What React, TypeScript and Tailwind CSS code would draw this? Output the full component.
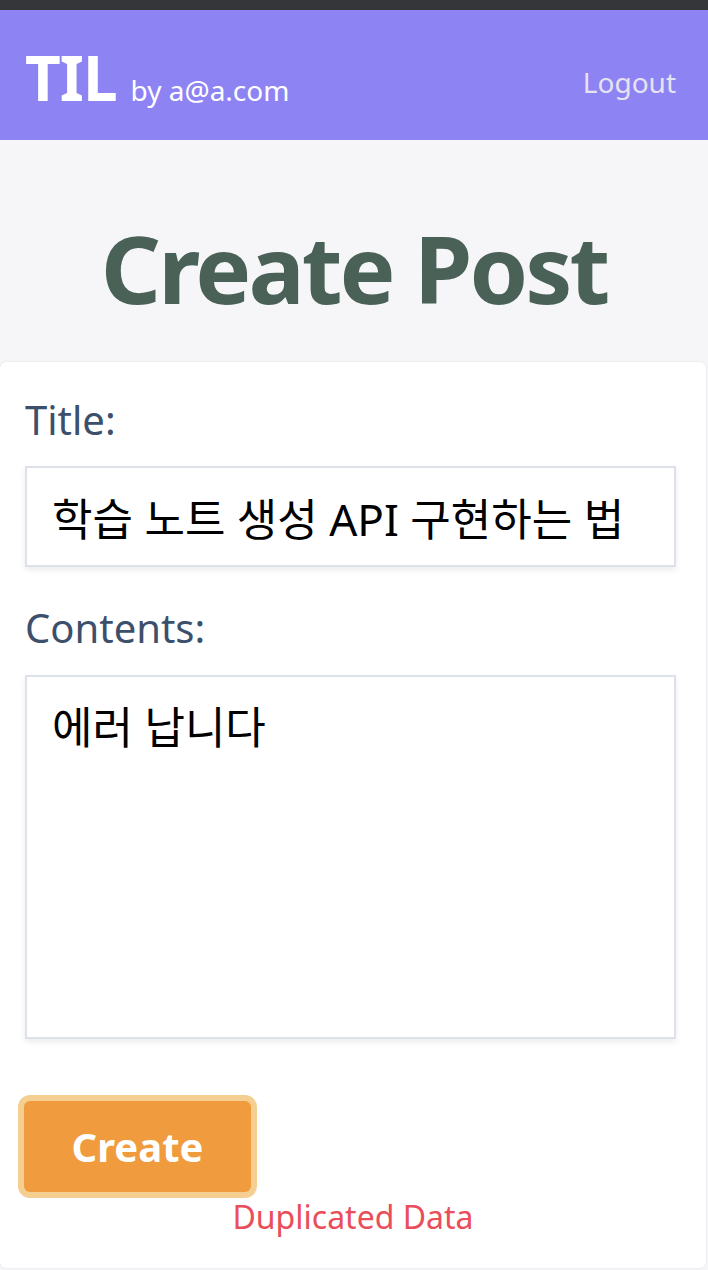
import React, { useState } from 'react'

const FONT = "font-['Noto_Sans','Noto_Sans_CJK_KR',sans-serif]"

export default function App() {
  const [title, setTitle] = useState('학습 노트 생성 API 구현하는 법')
  const [contents, setContents] = useState('에러 납니다')

  return (
    <div className={`${FONT} min-h-[1270px] bg-[#f6f6f8]`}>
      <div className="h-[10px] bg-[#35363a]" />

      {/* Header */}
      <header className="h-[130px] bg-[#8e83f3] flex items-center justify-between pl-[25px] pr-[32px]">
        <div className="flex items-baseline gap-[14px] mt-[4px]">
          <span className="text-[62px] font-bold text-white leading-none tracking-[-1px]">TIL</span>
          <span className="text-[28px] text-white leading-none">by a@a.com</span>
        </div>
        <button className="text-[28px] text-[#e6e3ef] leading-none mt-[14px]">Logout</button>
      </header>

      {/* Title */}
      <div className="h-[222px] pt-[81px] flex justify-center">
        <h1 className="text-[94px] font-bold text-[#4a6157] leading-none tracking-[-3px]">
          Create Post
        </h1>
      </div>

      {/* Form card */}
      <div className="w-[706px] bg-white rounded-[6px] shadow-[0_0_2px_rgba(0,0,0,0.12)] px-[25px] pt-[38px] pb-[32px] min-h-[906px]">
        <label className="block text-[40px] text-[#3c4f6b] leading-none">Title:</label>
        <input
          value={title}
          onChange={(e) => setTitle(e.target.value)}
          className="mt-[26px] block w-[651px] h-[101px] border-2 border-[#dde2ea] shadow-[0_3px_6px_rgba(0,0,0,0.08)] px-[25px] text-[44px] text-black outline-none"
        />

        <label className="block mt-[41px] text-[40px] text-[#3c4f6b] leading-none">Contents:</label>
        <textarea
          value={contents}
          onChange={(e) => setContents(e.target.value)}
          className="mt-[27px] block w-[651px] h-[364px] border-2 border-[#dde2ea] shadow-[0_3px_6px_rgba(0,0,0,0.08)] px-[25px] pt-[17px] text-[44px] text-black outline-none resize-none"
        />

        <div className="mt-[62px] ml-[-1px]">
          <button className="w-[227px] h-[91px] bg-[#f09b3d] rounded-[6px] ring-[6px] ring-[#f5cf91] text-white text-[40px] font-bold">
            Create
          </button>
        </div>
        <p className="mt-[9px] text-center text-[32px] text-[#e94e5a] leading-none">Duplicated Data</p>
      </div>
    </div>
  )
}
